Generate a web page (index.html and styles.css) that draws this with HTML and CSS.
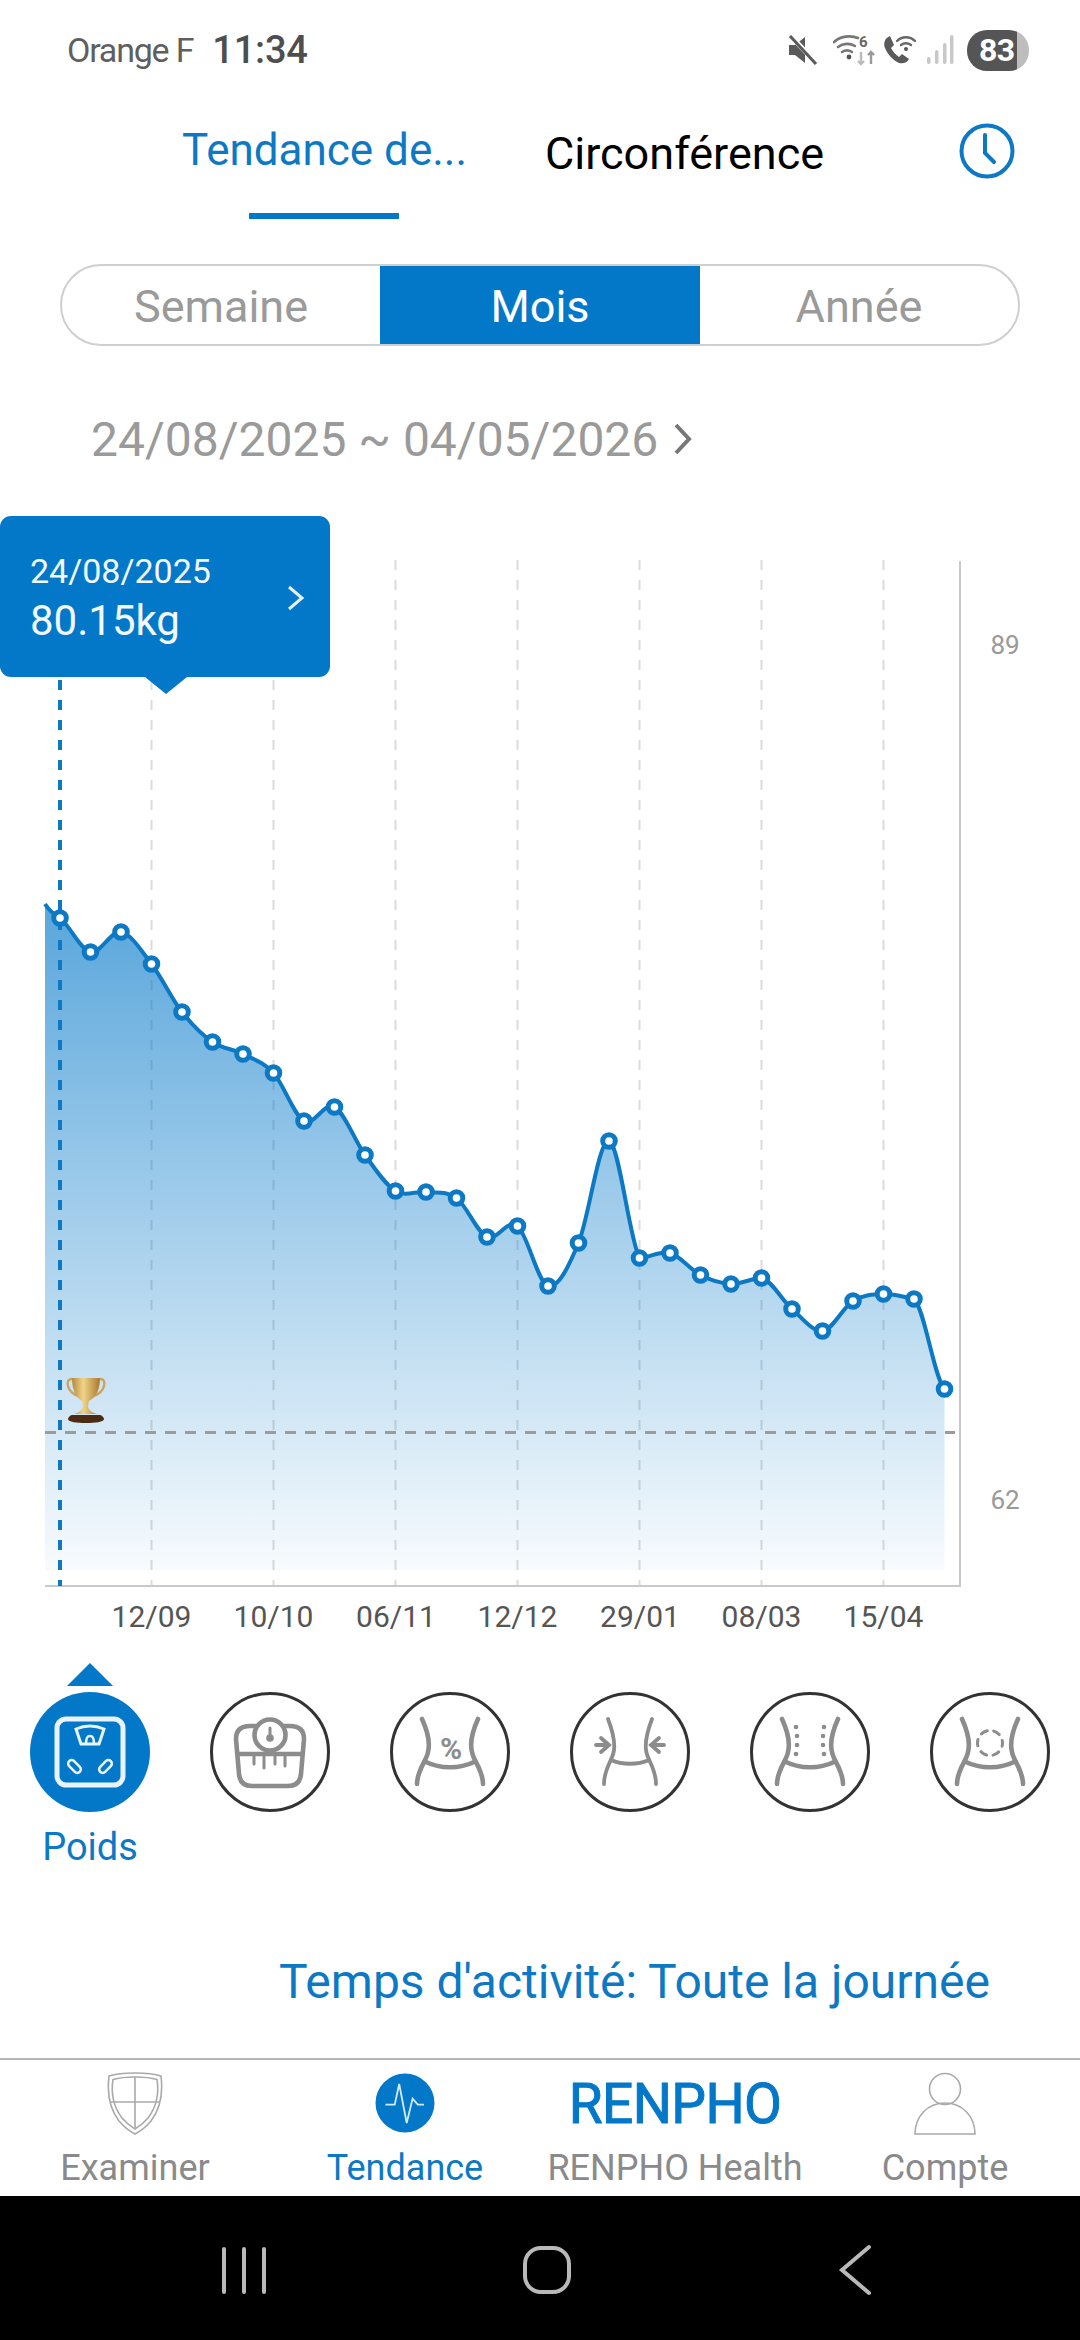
FILE: index.html
```html
<!DOCTYPE html>
<html lang="fr">
<head>
<meta charset="utf-8">
<title>Tendance</title>
<link rel="stylesheet" href="styles.css">
</head>
<body>
<div class="app">
  <header class="status">
    <div class="status-left"><span class="carrier">Orange F</span><span class="clock">11:34</span></div>
    <div class="status-right">
      <svg class="st-mute" width="30" height="30" viewBox="0 0 30 30"><path d="M1 10h6l10-8v26l-10-8H1z" fill="#5a5a5a"/><path d="M3 1l26 28" stroke="#fff" stroke-width="5"/><path d="M2 1l26 28" stroke="#5a5a5a" stroke-width="3"/></svg>
      <svg class="st-wifi" width="42" height="34" viewBox="0 0 42 34"><g fill="none" stroke="#777" stroke-width="2.6" stroke-linecap="round"><path d="M1 9C7 3 18 2 25 5"/><path d="M5 14c5-4 12-4 17-1"/><path d="M9 19c3-2 7-2 10 0"/></g><circle cx="16" cy="24" r="2.4" fill="#555"/><text x="26" y="14" class="st-six">6</text><path d="M28 19V31M25 28l3 3 3-3" fill="none" stroke="#bbb" stroke-width="2.4"/><path d="M38 31V19M35 22l3-3 3 3" fill="none" stroke="#999" stroke-width="2.4"/></svg>
      <svg class="st-call" width="34" height="30" viewBox="0 0 34 30"><path d="M7 1C2 3 0 8 2 13c3 7 8 12 14 15 4 1 8 0 10-4l-7-5-3 3c-3-2-6-5-8-9l3-3z" fill="#5a5a5a"/><g fill="none" stroke="#666" stroke-width="2.4" stroke-linecap="round"><path d="M14 6c5-5 13-5 18 0"/><path d="M18 10c3-2 7-2 10 0"/></g><circle cx="23" cy="14" r="2" fill="#555"/></svg>
      <svg class="st-signal" width="27" height="30" viewBox="0 0 27 30"><g fill="#c8c8c8"><rect x="0" y="22" width="3.5" height="7" rx="1.7"/><rect x="8" y="15" width="3.5" height="14" rx="1.7"/><rect x="16" y="8" width="3.5" height="21" rx="1.7"/><rect x="23" y="0" width="3.5" height="29" rx="1.7"/></g></svg>
      <div class="battery"><span class="battery-num">83</span></div>
    </div>
  </header>

  <nav class="tabs">
    <div class="tab tab-active">Tendance de...<span class="tab-bar"></span></div>
    <div class="tab tab-plain">Circonférence</div>
    <svg class="history" width="58" height="58" viewBox="0 0 58 58"><circle cx="29" cy="29" r="25.5" fill="none" stroke="#0d79c4" stroke-width="4"/><path d="M27 13v18l9 9" fill="none" stroke="#0d79c4" stroke-width="4" stroke-linecap="round"/></svg>
  </nav>

  <div class="segment">
    <div class="seg">Semaine</div>
    <div class="seg seg-on">Mois</div>
    <div class="seg">Année</div>
  </div>

  <div class="range"><span>24/08/2025 ~ 04/05/2026</span><svg width="22" height="34" viewBox="0 0 22 34"><path d="M4 3l13 14L4 31" fill="none" stroke="#777" stroke-width="4"/></svg></div>

  <section class="chart">
    <svg class="plot" width="1080" height="1150" viewBox="0 500 1080 1150">
      <defs>
        <linearGradient id="fill" gradientUnits="userSpaceOnUse" x1="0" y1="904" x2="0" y2="1570">
          <stop offset="0" stop-color="#0378c9" stop-opacity=".66"/>
          <stop offset="1" stop-color="#0378c9" stop-opacity=".03"/>
        </linearGradient>
        <linearGradient id="gold" x1="0" y1="0" x2="1" y2="0">
          <stop offset="0" stop-color="#b58a3c"/><stop offset=".4" stop-color="#f0d48a"/><stop offset="1" stop-color="#a8792c"/>
        </linearGradient>
      </defs>
      <g class="grid">
        <path d="M151.5 560V1586"/><path d="M273.5 560V1586"/><path d="M395.5 560V1586"/><path d="M517.5 560V1586"/><path d="M639.5 560V1586"/><path d="M761.5 560V1586"/><path d="M883.5 560V1586"/>
      </g>
      <path class="axis" d="M960 561V1586H45"/>
      <path class="area" d="M45 904c5 8 10 11 15 14c10.17 8 20.33 31.67 30.5 34c10.17 2.33 20.33 -22 30.5 -20c10.17 2 20.33 18.7 30.5 32c10.17 13.3 20.33 35 30.5 48c10.17 13 20.33 23 30.5 30c10.17 7 20.33 6.8 30.5 12c10.17 5.2 20.33 7.8 30.5 19c10.17 11.2 20.33 42.3 30.5 48c10.17 5.7 20.33 -19.7 30.5 -14c10.17 5.7 20.33 34 30.5 48c10.17 14 20.33 29.8 30.5 36c10.17 6.2 20.33 -.2 30.5 1c10.17 1.2 20.33 -1.5 30.5 6c10.17 7.5 20.33 34.3 30.5 39c10.17 4.7 20.33 -19.2 30.5 -11c10.17 8.2 20.33 57.2 30.5 60c10.17 2.8 20.33 -18.8 30.5 -43c10.17 -24.2 20.33 -104.5 30.5 -102c10.17 2.5 20.33 98.3 30.5 117c10.17 0 20.33 -7.8 30.5 -5c10.17 2.8 20.33 16.8 30.5 22c10.17 5.2 20.33 8.5 30.5 9c10.17 .5 20.33 -6 30.5 -6c10.17 2 20.33 22.2 30.5 31c10.17 8.8 20.33 23 30.5 22c10.17 -1 20.33 -23.8 30.5 -30c10.17 -6.2 20.33 -6.7 30.5 -7c10.17 -.3 20.33 3 30.5 5c10.17 8 20.33 80 30.5 90V1570H45Z"/>
      <path class="goal" d="M45 1432.5H955"/>
      <path class="select" d="M60 520V1586"/>
      <path class="line" d="M45 904c5 8 10 11 15 14c10.17 8 20.33 31.67 30.5 34c10.17 2.33 20.33 -22 30.5 -20c10.17 2 20.33 18.7 30.5 32c10.17 13.3 20.33 35 30.5 48c10.17 13 20.33 23 30.5 30c10.17 7 20.33 6.8 30.5 12c10.17 5.2 20.33 7.8 30.5 19c10.17 11.2 20.33 42.3 30.5 48c10.17 5.7 20.33 -19.7 30.5 -14c10.17 5.7 20.33 34 30.5 48c10.17 14 20.33 29.8 30.5 36c10.17 6.2 20.33 -.2 30.5 1c10.17 1.2 20.33 -1.5 30.5 6c10.17 7.5 20.33 34.3 30.5 39c10.17 4.7 20.33 -19.2 30.5 -11c10.17 8.2 20.33 57.2 30.5 60c10.17 2.8 20.33 -18.8 30.5 -43c10.17 -24.2 20.33 -104.5 30.5 -102c10.17 2.5 20.33 98.3 30.5 117c10.17 0 20.33 -7.8 30.5 -5c10.17 2.8 20.33 16.8 30.5 22c10.17 5.2 20.33 8.5 30.5 9c10.17 .5 20.33 -6 30.5 -6c10.17 2 20.33 22.2 30.5 31c10.17 8.8 20.33 23 30.5 22c10.17 -1 20.33 -23.8 30.5 -30c10.17 -6.2 20.33 -6.7 30.5 -7c10.17 -.3 20.33 3 30.5 5c10.17 8 20.33 80 30.5 90"/>
      <g class="dots">
        <circle cx="60" cy="918" r="6.3"/><circle cx="90.5" cy="952" r="6.3"/><circle cx="121" cy="932" r="6.3"/><circle cx="151.5" cy="964" r="6.3"/><circle cx="182" cy="1012" r="6.3"/><circle cx="212.5" cy="1042" r="6.3"/><circle cx="243" cy="1054" r="6.3"/><circle cx="273.5" cy="1073" r="6.3"/><circle cx="304" cy="1121" r="6.3"/><circle cx="334.5" cy="1107" r="6.3"/><circle cx="365" cy="1155" r="6.3"/><circle cx="395.5" cy="1191" r="6.3"/><circle cx="426" cy="1192" r="6.3"/><circle cx="456.5" cy="1198" r="6.3"/><circle cx="487" cy="1237" r="6.3"/><circle cx="517.5" cy="1226" r="6.3"/><circle cx="548" cy="1286" r="6.3"/><circle cx="578.5" cy="1243" r="6.3"/><circle cx="609" cy="1141" r="6.3"/><circle cx="639.5" cy="1258" r="6.3"/><circle cx="670" cy="1253" r="6.3"/><circle cx="700.5" cy="1275" r="6.3"/><circle cx="731" cy="1284" r="6.3"/><circle cx="761.5" cy="1278" r="6.3"/><circle cx="792" cy="1309" r="6.3"/><circle cx="822.5" cy="1331" r="6.3"/><circle cx="853" cy="1301" r="6.3"/><circle cx="883.5" cy="1294" r="6.3"/><circle cx="914" cy="1299" r="6.3"/><circle cx="944.5" cy="1389" r="6.3"/>
      </g>
      <g class="trophy">
        <path d="M72 1379c-4 0-5 3-4 7 1 5 6 9 11 10M100 1379c4 0 5 3 4 7-1 5-6 9-11 10" fill="none" stroke="#c9a55e" stroke-width="2.4"/>
        <path d="M72 1378h28c0 10-3 19-11 23l-1 5c0 4 5 7 9 8H74c4-1 9-4 9-8l-1-5c-7-4-10-13-10-23z" fill="url(#gold)"/>
        <path d="M72 1415h28c2 0 4 3 4 4 0 3-9 4-18 4s-18-1-18-4c0-1 2-4 4-4z" fill="#4a2c14"/>
      </g>
      <g class="ylab"><text x="1005" y="654">89</text><text x="1005" y="1509">62</text></g>
      <g class="xlab"><text x="151.5" y="1627">12/09</text><text x="273.5" y="1627">10/10</text><text x="396" y="1627">06/11</text><text x="517.5" y="1627">12/12</text><text x="640" y="1627">29/01</text><text x="761.5" y="1627">08/03</text><text x="883.5" y="1627">15/04</text></g>
    </svg>
    <div class="tip">
      <div class="tip-date">24/08/2025</div>
      <div class="tip-val">80.15kg</div>
      <svg class="tip-chev" width="18" height="26" viewBox="0 0 18 26"><path d="M2 2l13 11L2 24" fill="none" stroke="#e6f2fb" stroke-width="3"/></svg>
      <span class="tip-arrow"></span>
    </div>
  </section>

  <section class="metrics">
    <div class="metric">
      <span class="pointer"></span>
      <svg class="m-ic" width="120" height="120" viewBox="0 0 120 120"><circle cx="60" cy="60" r="60" fill="#0378c9"/><g fill="none" stroke="#e8f3fb"><rect x="27" y="27" width="66" height="66" rx="9" stroke-width="5"/><path d="M46 37c9-4 19-4 28 0l-5 15H51z" stroke-width="3"/><path d="M56 52c0-6 1-8 4-8s4 2 4 8" stroke-width="2.6"/><rect x="37" y="71" width="15" height="7" rx="3.5" transform="rotate(45 44.5 74.5)" stroke-width="2.6"/><rect x="68" y="71" width="15" height="7" rx="3.5" transform="rotate(-45 75.5 74.5)" stroke-width="2.6"/></g></svg>
      <span class="m-label">Poids</span>
    </div>
    <div class="metric">
      <svg class="m-ic" width="120" height="120" viewBox="0 0 120 120"><circle class="ring" cx="60" cy="60" r="58.5"/><g class="gly"><path d="M40 34H80Q94 34 94 47L91 82Q90 94 78 94H42Q30 94 29 82L26 47Q26 34 40 34Z"/><circle cx="60" cy="43" r="15.5" fill="#fff"/><path d="M28 62H92"/><path d="M44 63v9M54 63v13M65 63v9M75 63v11" stroke-width="3"/><path d="M60 36v8" stroke-width="3"/></g><circle cx="60" cy="46" r="3.8" fill="#8c8c8c"/></svg>
    </div>
    <div class="metric">
      <svg class="m-ic" width="120" height="120" viewBox="0 0 120 120"><circle class="ring" cx="60" cy="60" r="58.5"/><g class="gly"><path d="M32 27C38 40 40 52 38 60C37 68 27 78 27 92"/><path d="M88 27C82 40 80 52 82 60C83 68 93 78 93 92"/><path d="M36 70C50 77 70 77 84 70"/></g><text x="61" y="67" class="pct">%</text></svg>
    </div>
    <div class="metric">
      <svg class="m-ic" width="120" height="120" viewBox="0 0 120 120"><circle class="ring" cx="60" cy="60" r="58.5"/><g class="gly gly-thin"><path d="M38 27C43 40 45 50 44 58C43 68 34 76 34 92"/><path d="M82 27C77 40 75 50 76 58C77 68 86 76 86 92"/><path d="M41 68C52 73 68 73 79 68"/><path d="M26 53H39M31 46l8 7-8 7"/><path d="M94 53H81M89 46l-8 7 8 7"/></g></svg>
    </div>
    <div class="metric">
      <svg class="m-ic" width="120" height="120" viewBox="0 0 120 120"><circle class="ring" cx="60" cy="60" r="58.5"/><g class="gly"><path d="M32 27C38 40 40 52 38 60C37 68 27 78 27 92"/><path d="M88 27C82 40 80 52 82 60C83 68 93 78 93 92"/><path d="M36 70C50 77 70 77 84 70"/></g><g fill="#8c8c8c"><circle cx="46" cy="35" r="2.3"/><circle cx="47" cy="44" r="2.3"/><circle cx="47" cy="53" r="2.3"/><circle cx="46" cy="62" r="2.3"/><circle cx="74" cy="35" r="2.3"/><circle cx="73" cy="44" r="2.3"/><circle cx="73" cy="53" r="2.3"/><circle cx="74" cy="62" r="2.3"/></g></svg>
    </div>
    <div class="metric">
      <svg class="m-ic" width="120" height="120" viewBox="0 0 120 120"><circle class="ring" cx="60" cy="60" r="58.5"/><g class="gly"><path d="M32 27C38 40 40 52 38 60C37 68 27 78 27 92"/><path d="M88 27C82 40 80 52 82 60C83 68 93 78 93 92"/><path d="M36 70C50 77 70 77 84 70"/></g><circle cx="60" cy="51" r="12.5" fill="none" stroke="#8c8c8c" stroke-width="3" stroke-dasharray="6.5 6.6" stroke-dashoffset="3.2" stroke-linecap="round"/></svg>
    </div>
  </section>

  <p class="active-time">Temps d'activité: Toute la journée</p>

  <footer class="nav">
    <div class="nav-item">
      <svg width="58" height="64" viewBox="0 0 58 64"><g fill="none" stroke="#a9a9a9" stroke-width="1.6"><path d="M29 1C39 1 49 2 55 4C57 20 55 36 45 49C39 56 33 60 29 62C25 60 19 56 13 49C3 36 1 20 3 4C9 2 19 1 29 1Z"/><path d="M29 5C38 5 46 6 51 7.5C53 20 51 34 42 46C37 52 32 55 29 57C26 55 21 52 16 46C7 34 5 20 7 7.5C12 6 20 5 29 5Z"/><path d="M29 5V57M5 30H53"/></g></svg>
      <span class="nav-label">Examiner</span>
    </div>
    <div class="nav-item nav-on">
      <svg width="60" height="64" viewBox="0 0 60 64"><circle cx="30" cy="31" r="29.5" fill="#0378c9"/><path d="M10.4 32.6H19.7L24.2 12L31.7 51L37.6 26.6L42.8 32.6H49" fill="none" stroke="#d5ebf9" stroke-width="1.8"/></svg>
      <span class="nav-label">Tendance</span>
    </div>
    <div class="nav-item">
      <div class="logo">RENPHO</div>
      <span class="nav-label">RENPHO Health</span>
    </div>
    <div class="nav-item">
      <svg width="62" height="64" viewBox="0 0 62 64"><g fill="none" stroke="#a9a9a9" stroke-width="1.6"><circle cx="31" cy="17" r="15.5"/><path d="M1 62C1 44 14 31 31 31C48 31 61 44 61 62Z"/></g></svg>
      <span class="nav-label">Compte</span>
    </div>
  </footer>

  <div class="sys">
    <svg width="46" height="50" viewBox="0 0 46 50"><g stroke="#b9b9b9" stroke-width="4" stroke-linecap="round"><path d="M3 4V47M23 4V47M43 4V47"/></g></svg>
    <svg width="50" height="50" viewBox="0 0 50 50"><rect x="3" y="3" width="44" height="44" rx="16" fill="none" stroke="#b9b9b9" stroke-width="4"/></svg>
    <svg width="34" height="52" viewBox="0 0 34 52"><path d="M31 3L4 26L31 49" fill="none" stroke="#b9b9b9" stroke-width="4" stroke-linecap="round"/></svg>
  </div>
</div>
</body>
</html>
```
FILE: styles.css
```css
* { box-sizing: border-box; }
html, body { margin: 0; padding: 0; background: #fff; height: 2340px; overflow: hidden; }
body { font-family: Roboto, "Liberation Sans", sans-serif; }
.app { width: 1080px; height: 2340px; display: flex; flex-direction: column; overflow: hidden; }

.status { height: 100px; display: flex; justify-content: space-between; align-items: center; padding: 0 51px 0 67px; }
.status-left { display: flex; align-items: center; gap: 19px; }
.carrier { font-size: 34px; color: #5f5f5f; letter-spacing: -1.2px; }
.clock { font-size: 38px; font-weight: 500; color: #4e4e4e; letter-spacing: -.2px; }
.status-right { display: flex; align-items: center; }
.st-mute { margin-right: 15px; }
.st-six { font: 700 15px Roboto, sans-serif; fill: #666; }
.st-wifi { margin-right: 8px; }
.st-call { margin-right: 10px; }
.st-signal { margin-right: 13px; }
.battery { width: 62px; height: 41px; border-radius: 20px; background: linear-gradient(90deg, #555 0 50px, #bdbdbd 50px); display: flex; align-items: center; padding-left: 12px; }
.battery-num { font-size: 32px; font-weight: 700; color: #fff; letter-spacing: -.5px; }

.tabs { height: 120px; position: relative; }
.tab { position: absolute; white-space: nowrap; font-size: 44px; }
.tab-active { left: 182px; top: 24px; color: #0d79c4; }
.tab-plain { left: 545px; top: 27px; color: #000; font-size: 45px; }
.tab-bar { position: absolute; left: 67px; top: 89px; width: 150px; height: 6px; background: #0378c9; }
.history { position: absolute; left: 958px; top: 22px; }

.segment { margin: 44px 60px 0; height: 82px; display: grid; grid-template-columns: 318px 320px 318px; border: 2px solid #cfcfcf; border-radius: 41px; overflow: hidden; }
.seg { display: flex; align-items: center; justify-content: center; font-size: 45px; padding-top: 2px; color: #9a9a9a; }
.seg-on { background: #0378c9; color: #fff; margin: -2px 0; }

.range { margin: 63px 0 0 91px; height: 60px; display: flex; align-items: center; gap: 14px; font-size: 48px; color: #9a9a9a; white-space: nowrap; }

.chart { position: relative; margin-top: 31px; height: 1150px; flex: none; }
.plot { display: block; }
.grid path { stroke: #dcdcdc; stroke-width: 2; stroke-dasharray: 10 10; fill: none; }
.axis { fill: none; stroke: #c9c9c9; stroke-width: 2; }
.area { fill: url(#fill); }
.goal { stroke: #9b9b9b; stroke-width: 3; stroke-dasharray: 11 9; fill: none; }
.select { stroke: #0d79c4; stroke-width: 4; stroke-dasharray: 10 10; fill: none; }
.line { fill: none; stroke: #0d79c4; stroke-width: 4; }
.dots circle { fill: #fff; stroke: #0d79c4; stroke-width: 5; }
.ylab text { font-size: 26px; fill: #999; font-family: Roboto, sans-serif; text-anchor: middle; }
.xlab text { font-size: 30px; fill: #555; font-family: Roboto, sans-serif; text-anchor: middle; }

.tip { position: absolute; left: 0; top: 16px; width: 330px; height: 161px; background: #0378c9; border-radius: 11px; padding: 35px 0 0 30px; color: #f2f8fc; }
.tip-date { font-size: 34px; line-height: 40px; }
.tip-val { font-size: 42px; line-height: 52px; margin-top: 4px; }
.tip-chev { position: absolute; left: 287px; top: 69px; }
.tip-arrow { position: absolute; left: 145px; top: 161px; width: 0; height: 0; border-left: 21px solid transparent; border-right: 21px solid transparent; border-top: 17px solid #0378c9; }

.metrics { height: 230px; margin-top: -10px; padding: 0 30px; display: grid; grid-template-columns: repeat(6, 120px); column-gap: 60px; flex: none; position: relative; }
.metric { position: relative; padding-top: 52px; display: flex; flex-direction: column; align-items: center; }
.m-ic { display: block; flex: none; }
.pointer { position: absolute; left: 37px; top: 23px; width: 0; height: 0; border-left: 23px solid transparent; border-right: 23px solid transparent; border-bottom: 23px solid #0378c9; }
.m-label { font-size: 38px; color: #0d79c4; margin-top: 13px; white-space: nowrap; }
.ring { fill: #fff; stroke: #333; stroke-width: 3; }
.gly { fill: none; stroke: #8c8c8c; stroke-width: 4.6; stroke-linecap: round; }
.gly-thin { stroke-width: 3.8; }
.pct { font: 700 30px Roboto, sans-serif; fill: #8c8c8c; text-anchor: middle; }

.active-time { margin: 0; height: 138px; flex: none; text-align: right; padding: 85px 90px 0 0; font-size: 48px; line-height: 54px; color: #0d79c4; white-space: nowrap; }

.nav { margin-top: auto; height: 138px; flex: none; border-top: 2px solid #b5b5b5; display: grid; grid-template-columns: repeat(4, 270px); }
.nav-item { display: flex; flex-direction: column; align-items: center; padding-top: 12px; }
.nav-item svg { display: block; flex: none; }
.nav-label { font-size: 36px; line-height: 40px; margin-top: 12px; color: #8a8a8a; white-space: nowrap; }
.nav-on .nav-label { color: #0d79c4; }
.logo { height: 64px; font-size: 55px; line-height: 64px; font-weight: 400; -webkit-text-stroke: 1px #0378c9; color: #0378c9; letter-spacing: -.6px; }

.sys { height: 144px; flex: none; background: #000; display: flex; align-items: center; padding: 4px 0 0 221px; }
.sys svg:nth-child(1) { margin-right: 255px; }
.sys svg:nth-child(2) { margin-right: 266px; }
```
